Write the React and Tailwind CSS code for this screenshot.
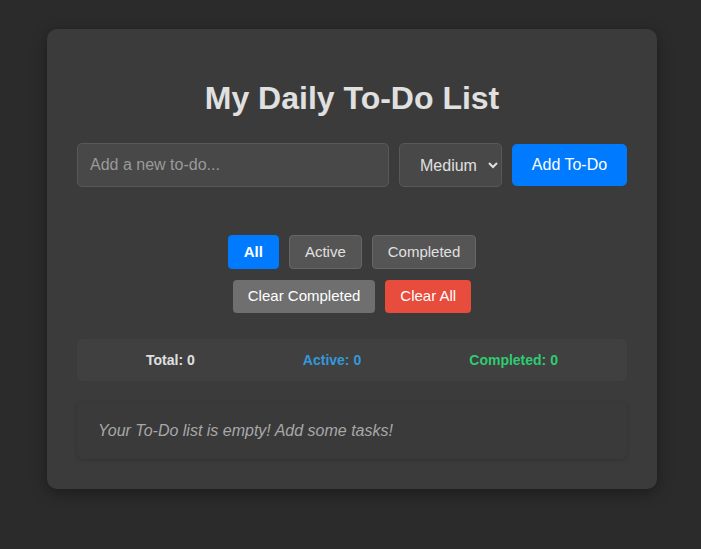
import React from 'react';

export default function App() {
  const font = { fontFamily: '"Liberation Sans", Arial, sans-serif' };

  return (
    <div className="min-h-screen w-full bg-[#2b2b2b] pt-[29px]" style={font}>
      <div className="ml-[47px] w-[610px] rounded-[10px] bg-[#3b3b3b] px-[30px] pt-[30px] pb-[30px] shadow-[0_4px_15px_rgba(0,0,0,0.35)]">
        {/* Title */}
        <h1 className="mt-[21px] mb-[26px] text-center text-[32px] font-bold leading-[37px] text-[#e0e0e0]">
          My Daily To-Do List
        </h1>

        {/* Add row */}
        <div className="flex items-center gap-[10px]">
          <input
            className="h-[44px] flex-1 rounded-[5px] border border-[#585858] bg-[#484848] px-[12px] text-[16px] text-[#e0e0e0] outline-none placeholder:text-[#9a9a9a]"
            placeholder="Add a new to-do..."
          />
          <select
            defaultValue="medium"
            className="h-[44px] w-[103px] rounded-[5px] border border-[#585858] bg-[#484848] pl-[16px] pr-[4px] text-[16px] text-[#e0e0e0] outline-none"
          >
            <option value="low">Low</option>
            <option value="medium">Medium</option>
            <option value="high">High</option>
          </select>
          <button className="h-[42px] w-[115px] rounded-[5px] bg-[#007bff] text-[16px] text-white">
            Add To-Do
          </button>
        </div>

        {/* Filters */}
        <div className="mt-[48px] flex justify-center gap-[10px]">
          <button className="h-[34px] rounded-[4px] border border-[#007bff] bg-[#007bff] px-[15px] text-[15px] font-bold text-white">
            All
          </button>
          <button className="h-[34px] rounded-[4px] border border-[#666] bg-[#555] px-[15px] text-[15px] text-[#e0e0e0]">
            Active
          </button>
          <button className="h-[34px] rounded-[4px] border border-[#666] bg-[#555] px-[15px] text-[15px] text-[#e0e0e0]">
            Completed
          </button>
        </div>
        <div className="mt-[11px] flex justify-center gap-[10px]">
          <button className="h-[33px] rounded-[4px] bg-[#6f6f6f] px-[15px] text-[15px] text-white">
            Clear Completed
          </button>
          <button className="h-[33px] rounded-[4px] bg-[#e74c3c] px-[15px] text-[15px] text-white">
            Clear All
          </button>
        </div>

        {/* Stats */}
        <div className="mt-[26px] flex h-[42px] items-center justify-around rounded-[6px] bg-[#404040] px-[15px] text-[14px] font-bold">
          <span className="text-[#e0e0e0]">Total: 0</span>
          <span className="text-[#3498db]">Active: 0</span>
          <span className="text-[#2ecc71]">Completed: 0</span>
        </div>

        {/* Empty state */}
        <div className="mt-[21px] flex h-[57px] items-center rounded-[6px] bg-[#3a3a3a] px-[21px] shadow-[0_1px_4px_rgba(0,0,0,0.18)]">
          <p className="text-[16px] italic text-[#a8a8a8]">Your To-Do list is empty! Add some tasks!</p>
        </div>
      </div>
    </div>
  );
}
